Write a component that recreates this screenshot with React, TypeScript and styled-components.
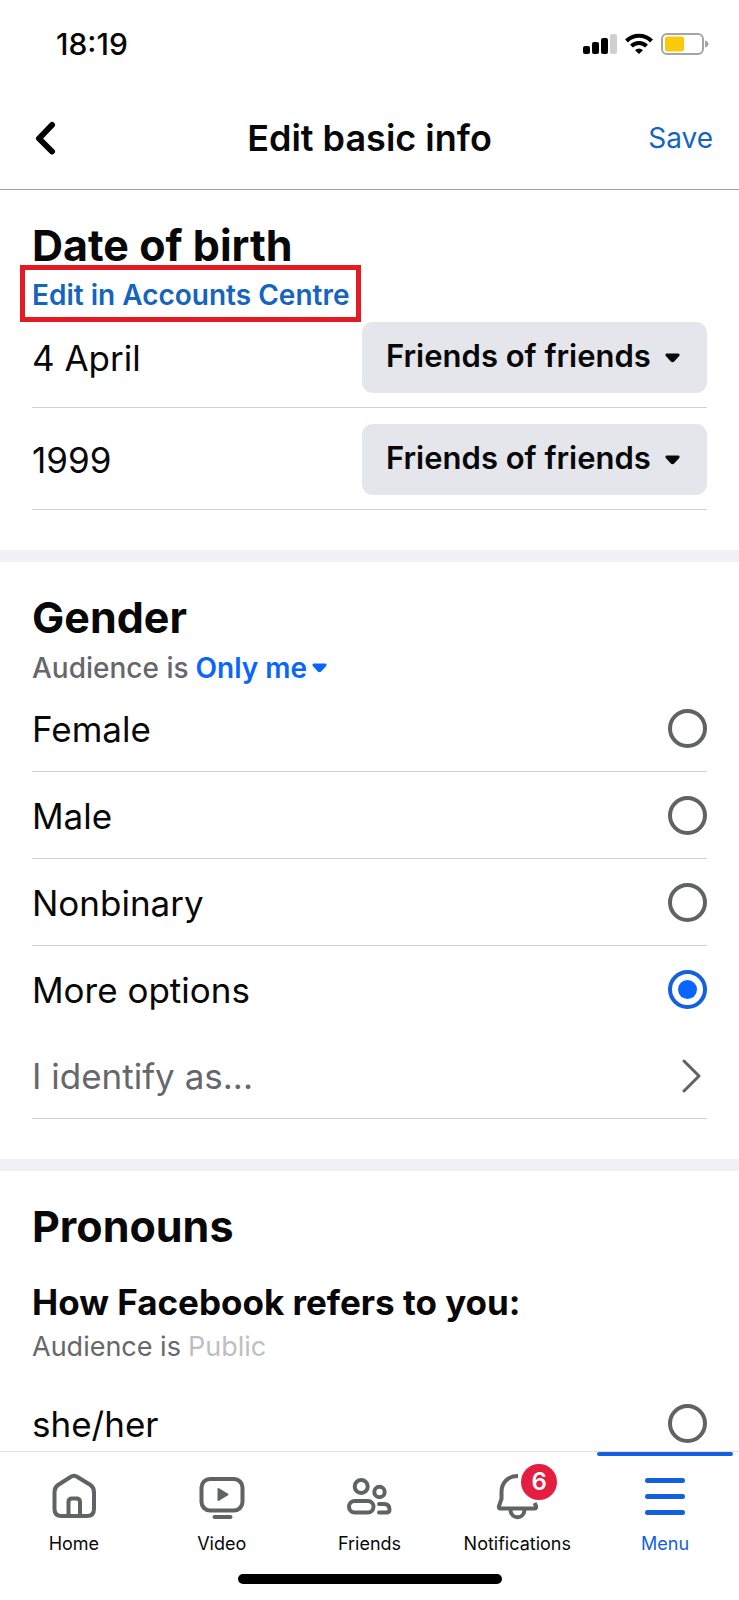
import React, { useState } from "react";
import styled, { createGlobalStyle } from "styled-components";

const color = {
  text: "#080809",
  muted: "#65676b",
  faint: "#bcc0c4",
  link: "#1565c0",
  accent: "#0866ff",
  menu: "#1460e0",
  line: "#ced0d4",
  band: "#eff1f5",
  control: "#e4e6eb",
  badge: "#e41e3f",
  highlight: "#e31b23",
};

const GlobalStyle = createGlobalStyle`
  *, *::before, *::after { box-sizing: border-box; }
  body { margin: 0; background: #fff; }
  body, button, select, input {
    font-family: Inter, "Liberation Sans", sans-serif;
    color: ${color.text};
  }
  h1, h2, h3, p, ul { margin: 0; padding: 0; }
`;

const Screen = styled.div`
  display: flex;
  flex-direction: column;
  height: 100vh;
  background: #fff;
`;

const StatusBar = styled.div`
  display: flex;
  flex: none;
  align-items: center;
  justify-content: space-between;
  height: 88px;
  padding: 0 30px 0 56px;
`;

const Clock = styled.time`
  font-size: 30px;
  line-height: 34px;
  font-weight: 500;
`;

const StatusIcons = styled.div`
  display: flex;
  align-items: center;
  gap: 8px;
`;

const Header = styled.header`
  display: grid;
  flex: none;
  grid-template-columns: 1fr auto 1fr;
  align-items: center;
  height: 102px;
  padding: 0 26px 2px;
  border-bottom: 1px solid #a0a0a0;
`;

const HeaderTitle = styled.h1`
  font-size: 36px;
  line-height: 44px;
  font-weight: 600;
`;

const PlainButton = styled.button`
  display: flex;
  align-items: center;
  padding: 0;
  border: 0;
  background: none;
  cursor: pointer;
`;

const BackButton = styled(PlainButton)`
  justify-self: start;
  padding: 8px;
`;

const SaveButton = styled(PlainButton)`
  justify-self: end;
  font-size: 28px;
  line-height: 34px;
  color: ${color.link};
`;

const Content = styled.main`
  flex: 1;
  min-height: 0;
  overflow-y: auto;
  scrollbar-width: none;
`;

const Section = styled.section`
  padding: 35px 32px 40px;
  border-bottom: 12px solid ${color.band};

  &:last-child {
    border-bottom: 0;
  }
`;

const SectionTitle = styled.h2`
  font-size: 43px;
  line-height: 40px;
  font-weight: 700;
`;

const SubTitle = styled.h3`
  margin-top: 34px;
  font-size: 35px;
  line-height: 44px;
  font-weight: 700;
`;

const HighlightedLink = styled.a`
  display: block;
  width: fit-content;
  height: 57px;
  margin-left: -12px;
  padding: 0 7px;
  border: 5px solid ${color.highlight};
  font-size: 28px;
  line-height: 50px;
  font-weight: 600;
  color: ${color.link};
  text-decoration: none;
`;

const Audience = styled.div<{ $gap: number; $medium?: boolean }>`
  display: flex;
  align-items: center;
  gap: 7px;
  margin-top: ${(p) => p.$gap}px;
  font-size: ${(p) => (p.$medium ? 28 : 27)}px;
  line-height: 34px;
  font-weight: ${(p) => (p.$medium ? 500 : 400)};
  color: ${color.muted};
`;

const FaintText = styled.span`
  color: ${color.faint};
`;

const InlineSelectWrap = styled.span`
  display: flex;
  align-items: center;
  gap: 4px;
`;

const InlineSelect = styled.select`
  appearance: none;
  padding: 0;
  border: 0;
  background: none;
  font-size: 28px;
  line-height: 34px;
  font-weight: 600;
  color: ${color.accent};
`;

const List = styled.div<{ $gap?: number }>`
  margin-top: ${(p) => p.$gap ?? 0}px;
`;

const DateRow = styled.div`
  display: flex;
  align-items: center;
  justify-content: space-between;
  padding: 16px 0 14px;
  border-bottom: 1px solid ${color.line};
  font-size: 35px;
  line-height: 44px;

  &:first-child {
    padding-top: 0;
  }
`;

const SelectWrap = styled.span`
  display: flex;
  position: relative;
  align-items: center;
  flex: 0 0 345px;

  svg {
    position: absolute;
    right: 27px;
    pointer-events: none;
  }
`;

const PrivacySelect = styled.select`
  appearance: none;
  width: 100%;
  height: 71px;
  padding: 0 48px 4px 24px;
  border: 0;
  border-radius: 11px;
  background: ${color.control};
  font-size: 31px;
  line-height: 40px;
  font-weight: 600;
`;

const OptionRow = styled.label<{ $divider: boolean }>`
  display: flex;
  align-items: center;
  justify-content: space-between;
  height: ${(p) => (p.$divider ? 87 : 86)}px;
  padding-top: 1px;
  border-bottom: ${(p) => (p.$divider ? `1px solid ${color.line}` : "0")};
  font-size: 35px;
  line-height: 44px;
  cursor: pointer;
`;

const Radio = styled.input`
  appearance: none;
  display: grid;
  place-items: center;
  width: 39px;
  height: 39px;
  margin: 0;
  border: 4px solid #606265;
  border-radius: 50%;

  &:checked {
    border-color: #1460e0;
  }

  &:checked::before {
    content: "";
    width: 19px;
    height: 19px;
    border-radius: 50%;
    background: ${color.accent};
  }
`;

const IdentifyButton = styled(PlainButton)`
  justify-content: space-between;
  width: 100%;
  height: 87px;
  padding-top: 2px;
  border-bottom: 1px solid ${color.line};
  font-size: 35px;
  line-height: 44px;
  color: ${color.muted};

  svg {
    margin-right: 6px;
  }
`;

const TabBar = styled.nav`
  flex: none;
  padding-bottom: 16px;
  border-top: 1px solid #dfe0e2;
  background: #fff;
`;

const Tabs = styled.ul`
  display: grid;
  grid-template-columns: repeat(5, 1fr);
  list-style: none;
`;

const Tab = styled.a<{ $active: boolean }>`
  display: flex;
  position: relative;
  flex-direction: column;
  align-items: center;
  gap: 12px;
  padding: 20px 0 18px;
  font-size: 18px;
  line-height: 24px;
  color: ${(p) => (p.$active ? color.menu : color.text)};
  text-decoration: none;

  &::before {
    content: "";
    display: ${(p) => (p.$active ? "block" : "none")};
    position: absolute;
    top: 0;
    left: 6px;
    right: 6px;
    height: 4px;
    border-radius: 2px;
    background: ${color.menu};
  }
`;

const TabIcon = styled.span`
  display: block;
  position: relative;
  width: 48px;
  height: 48px;
`;

const Badge = styled.span`
  display: grid;
  place-items: center;
  position: absolute;
  top: -8px;
  left: 28px;
  width: 36px;
  height: 36px;
  border-radius: 50%;
  background: ${color.badge};
  font-size: 24px;
  line-height: 28px;
  font-weight: 600;
  color: #fff;
`;

const HomeIndicator = styled.div`
  width: 264px;
  height: 10px;
  margin: 0 auto;
  border-radius: 5px;
  background: #000;
`;

const SignalIcon = () => (
  <svg width="34" height="22" viewBox="0 0 34 22" aria-hidden="true">
    <rect x="0" y="13" width="7" height="8" rx="2" />
    <rect x="9" y="9" width="7" height="12" rx="2" />
    <rect x="18" y="5" width="7" height="16" rx="2" />
    <rect x="27" y="1" width="7" height="20" rx="2" fill="#cfcfcf" />
  </svg>
);

const WifiIcon = () => (
  <svg width="28" height="22" viewBox="0 0 28 22" fill="none" stroke="#000" strokeWidth="4" aria-hidden="true">
    <path d="M1.5 8A17.5 17.5 0 0 1 26.500 8" />
    <path d="M6.500 13.200A10.500 10.500 0 0 1 21.500 13.200" />
    <path d="M14 21L10 17.200Q14 13.800 18 17.200Z" fill="#000" stroke="none" />
  </svg>
);

const BatteryIcon = () => (
  <svg width="48" height="22" viewBox="0 0 48 22" aria-hidden="true">
    <rect x="1" y="1" width="41" height="20" rx="5" fill="#fff" stroke="#a5a5a5" strokeWidth="2" />
    <rect x="4" y="3.500" width="19" height="15" rx="2.500" fill="#fbc90b" />
    <path d="M44 7.500Q47.500 8.500 47.500 11T44 14.500Z" fill="#a5a5a5" />
  </svg>
);

const BackIcon = () => (
  <svg width="22" height="34" viewBox="0 0 22 34" fill="none" stroke="#000" strokeWidth="6" strokeLinecap="round" strokeLinejoin="round" aria-hidden="true">
    <path d="M18 4L5 17.500L18 30.500" />
  </svg>
);

const ForwardIcon = () => (
  <svg width="20" height="34" viewBox="0 0 20 34" fill="none" stroke="#606265" strokeWidth="3" strokeLinecap="round" strokeLinejoin="round" aria-hidden="true">
    <path d="M3 2L18 17L3 32" />
  </svg>
);

const CaretIcon = ({ fill }: { fill: string }) => (
  <svg width="15" height="10" viewBox="0 0 15 10" aria-hidden="true">
    <path d="M1.500 0.500H13.500Q15.200 1 14.200 3L9.200 8.500Q7.500 10 5.800 8.500L0.800 3Q-0.200 1 1.500 0.500Z" fill={fill} />
  </svg>
);

const iconProps = {
  width: 48,
  height: 48,
  viewBox: "0 0 48 48",
  fill: "none",
  stroke: "#606265",
  strokeWidth: 4,
  "aria-hidden": true,
} as const;

const HomeIcon = () => (
  <svg {...iconProps}>
    <path d="M4.500 20Q4.500 15.500 8 13L20.500 5Q24 2.500 27.500 5L40.500 13Q44 15.500 44 20V37Q44 44 37 44H11.500Q4.500 44 4.500 37Z" />
    <path d="M18.500 44V30Q18.500 26.500 22 26.500H26.500Q30 26.500 30 30V44" />
  </svg>
);

const VideoIcon = () => (
  <svg {...iconProps}>
    <rect x="3.500" y="7" width="41" height="31.500" rx="8.500" />
    <path d="M20.500 17L29.500 22.500L20.500 28Z" fill="#606265" strokeWidth="2" strokeLinejoin="round" />
    <path d="M16.500 45H32.500" strokeLinecap="round" />
  </svg>
);

const FriendsIcon = () => (
  <svg {...iconProps}>
    <circle cx="16.200" cy="14.500" r="6.500" />
    <circle cx="34.500" cy="20" r="5.200" />
    <rect x="4" y="29" width="24.500" height="11.500" rx="5.700" />
    <path d="M34 32H39Q44.500 32 44.500 37.500Q44.500 40.500 41.500 40.500H34" strokeLinecap="round" />
  </svg>
);

const BellIcon = () => (
  <svg {...iconProps}>
    <path d="M25 4C14.500 4 8.500 11 8.500 20V27L6 34Q5.500 36.500 7 36.500H42Q43.500 36.500 43 34L41.500 31" />
    <path d="M17.500 38C18 47.500 31 47.500 31.500 38" />
  </svg>
);

const MenuIcon = () => (
  <svg {...iconProps} stroke={color.menu} strokeWidth={5} strokeLinecap="round">
    <path d="M6.500 8.500H41.500M6.500 24.500H41.500M6.500 40.500H41.500" />
  </svg>
);

const birthRows = [
  { id: "birth-day", value: "4 April" },
  { id: "birth-year", value: "1999" },
];

const genders = ["Female", "Male", "Nonbinary", "More options"];

const tabs = [
  { label: "Home", Icon: HomeIcon },
  { label: "Video", Icon: VideoIcon },
  { label: "Friends", Icon: FriendsIcon },
  { label: "Notifications", Icon: BellIcon, badge: 6 },
  { label: "Menu", Icon: MenuIcon, active: true },
];

export default function App() {
  const [gender, setGender] = useState("More options");
  const [pronoun, setPronoun] = useState("");

  return (
    <Screen>
      <GlobalStyle />
      <StatusBar>
        <Clock>18:19</Clock>
        <StatusIcons>
          <SignalIcon />
          <WifiIcon />
          <BatteryIcon />
        </StatusIcons>
      </StatusBar>

      <Header>
        <BackButton type="button" aria-label="Back">
          <BackIcon />
        </BackButton>
        <HeaderTitle>Edit basic info</HeaderTitle>
        <SaveButton type="button">Save</SaveButton>
      </Header>

      <Content>
        <Section>
          <SectionTitle>Date of birth</SectionTitle>
          <HighlightedLink href="#accounts-centre">Edit in Accounts Centre</HighlightedLink>
          <List>
            {birthRows.map((row) => (
              <DateRow key={row.id}>
                <label htmlFor={row.id}>{row.value}</label>
                <SelectWrap>
                  <PrivacySelect id={row.id} defaultValue="Friends of friends">
                    <option>Friends of friends</option>
                    <option>Only me</option>
                  </PrivacySelect>
                  <CaretIcon fill={color.text} />
                </SelectWrap>
              </DateRow>
            ))}
          </List>
        </Section>

        <Section>
          <SectionTitle>Gender</SectionTitle>
          <Audience $gap={14} $medium>
            <label htmlFor="gender-audience">Audience is</label>
            <InlineSelectWrap>
              <InlineSelect id="gender-audience" defaultValue="Only me">
                <option>Only me</option>
                <option>Public</option>
              </InlineSelect>
              <CaretIcon fill={color.accent} />
            </InlineSelectWrap>
          </Audience>
          <List>
            {genders.map((name) => (
              <OptionRow key={name} $divider={name !== "More options"}>
                {name}
                <Radio
                  type="radio"
                  name="gender"
                  value={name}
                  checked={gender === name}
                  onChange={() => setGender(name)}
                />
              </OptionRow>
            ))}
            <IdentifyButton type="button">
              I identify as...
              <ForwardIcon />
            </IdentifyButton>
          </List>
        </Section>

        <Section>
          <SectionTitle>Pronouns</SectionTitle>
          <SubTitle>How Facebook refers to you:</SubTitle>
          <Audience $gap={6}>
            Audience is <FaintText>Public</FaintText>
          </Audience>
          <List $gap={16}>
            <OptionRow $divider>
              she/her
              <Radio
                type="radio"
                name="pronoun"
                value="she/her"
                checked={pronoun === "she/her"}
                onChange={() => setPronoun("she/her")}
              />
            </OptionRow>
          </List>
        </Section>
      </Content>

      <TabBar>
        <Tabs>
          {tabs.map(({ label, Icon, badge, active }) => (
            <li key={label}>
              <Tab href={`#${label.toLowerCase()}`} $active={Boolean(active)}>
                <TabIcon>
                  <Icon />
                  {badge && <Badge>{badge}</Badge>}
                </TabIcon>
                {label}
              </Tab>
            </li>
          ))}
        </Tabs>
        <HomeIndicator />
      </TabBar>
    </Screen>
  );
}
